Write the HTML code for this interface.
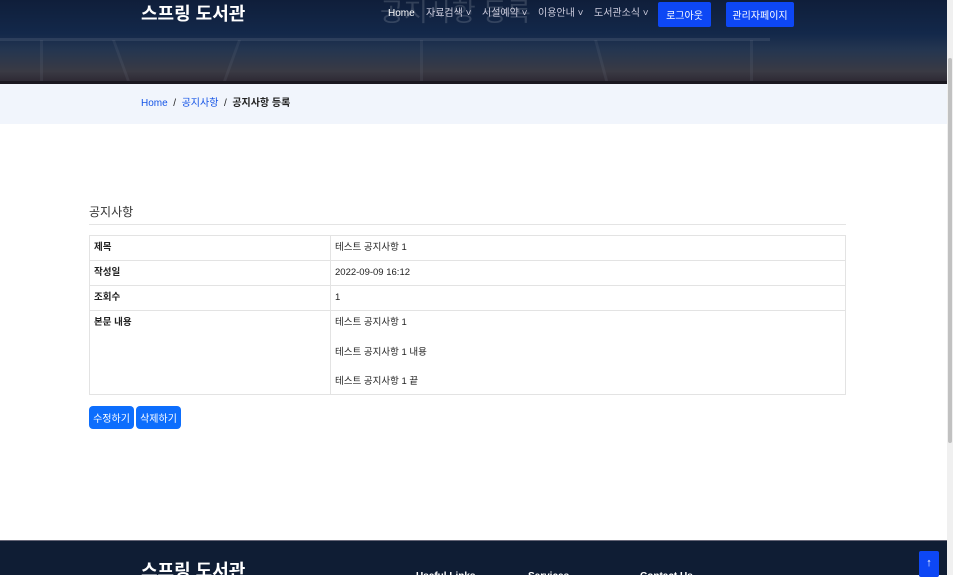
<!DOCTYPE html>
<html><head><meta charset="utf-8"><style>
*{margin:0;padding:0;box-sizing:border-box}
body{width:953px;height:575px;overflow:hidden;background:#fff;font-family:"Liberation Sans","Noto Sans CJK KR",sans-serif;position:relative}
.hdr{position:absolute;left:0;top:0;width:947px;height:84px;background:linear-gradient(180deg,#0f1e3a 0%,#13284a 40%,#253650 60%,#3a3a44 85%,#2a2530 100%);overflow:hidden}
.hdr .leg{position:absolute;top:40px;height:44px;width:3px;background:rgba(130,140,160,.12)}
.logo{position:absolute;left:141px;top:2px;color:#fff;font-size:18px;font-weight:bold;line-height:24px}
.nav{position:absolute;top:7px;font-size:10px;color:#ccd;line-height:14px}
.btn{position:absolute;top:2px;height:25px;background:#0d47f5;color:#fff;font-size:10px;display:flex;align-items:center;justify-content:center;border-radius:2px}
.bc{position:absolute;left:0;top:84px;width:947px;height:40px;background:#f1f5fc;font-size:10px;line-height:40px;padding-left:141px;color:#222}
.bc a{color:#1454e6;text-decoration:none}
h2{position:absolute;left:89px;top:203px;font-size:12px;font-weight:normal;color:#333}
.hr{position:absolute;left:89px;top:224px;width:757px;height:1px;background:#e4e4e4}
table{position:absolute;left:89px;top:235px;width:757px;border-collapse:collapse;font-size:9.5px;color:#222}
td{border:1px solid #e3e3e3;padding:0 4px;vertical-align:top;height:25px;line-height:23px}
td.k{width:241px;font-weight:bold}
.b2{position:absolute;top:406px;height:23px;background:#0d6efd;color:#fff;font-size:10px;display:flex;align-items:center;justify-content:center;border-radius:4px}
.ft{position:absolute;left:0;top:540px;width:947px;height:35px;background:#0f1d34;border-top:1px solid #667}
.scroll{position:absolute;left:947px;top:0;width:6px;height:575px;background:#f0f0f0}
.scroll div{position:absolute;left:1px;top:58px;width:4px;height:385px;background:#c1c1c1;border-radius:2px}
</style></head><body>
<div class="hdr">
<div class="leg" style="left:40px"></div><div class="leg" style="left:120px;transform:skewX(20deg)"></div>
<div class="leg" style="left:230px;transform:skewX(-20deg)"></div><div class="leg" style="left:420px"></div>
<div class="leg" style="left:600px;transform:skewX(15deg)"></div><div class="leg" style="left:750px"></div>
<div style="position:absolute;left:0;top:38px;width:770px;height:3px;background:rgba(160,170,190,.15)"></div>
<div style="position:absolute;left:0;top:81px;width:947px;height:3px;background:#1a1820"></div>
<div style="position:absolute;left:380px;top:-8px;font-size:26px;color:rgba(255,255,255,.15)">공지사항 등록</div>
<div class="logo">스프링 도서관</div>
<div class="nav" style="left:388px;color:#fff">Home</div>
<div class="nav" style="left:426px">자료검색 ˅</div>
<div class="nav" style="left:482px">시설예약 ˅</div>
<div class="nav" style="left:538px">이용안내 ˅</div>
<div class="nav" style="left:594px">도서관소식 ˅</div>
<div class="btn" style="left:658px;width:53px">로그아웃</div>
<div class="btn" style="left:726px;width:68px">관리자페이지</div>
</div>
<div class="bc"><a>Home</a> &nbsp;/&nbsp; <a>공지사항</a> &nbsp;/&nbsp; <b>공지사항 등록</b></div>
<h2>공지사항</h2><div class="hr"></div>
<table>
<tr><td class="k">제목</td><td>테스트 공지사항 1</td></tr>
<tr><td class="k">작성일</td><td>2022-09-09 16:12</td></tr>
<tr><td class="k">조회수</td><td>1</td></tr>
<tr><td class="k" style="height:84px">본문 내용</td><td style="line-height:29.5px;padding-top:0;height:84px"><div style="margin-top:-3px;height:80px;overflow:visible">테스트 공지사항 1<br>테스트 공지사항 1 내용<br>테스트 공지사항 1 끝</div></td></tr>
</table>
<div class="b2" style="left:89px;width:45px">수정하기</div>
<div class="b2" style="left:136px;width:45px">삭제하기</div>
<div class="ft">
<div style="position:absolute;left:141px;top:16px;color:#fff;font-size:18px;font-weight:bold">스프링 도서관</div>
<div style="position:absolute;left:416px;top:30px;color:#fff;font-size:10px;font-weight:bold">Useful Links</div>
<div style="position:absolute;left:528px;top:30px;color:#fff;font-size:10px;font-weight:bold">Services</div>
<div style="position:absolute;left:640px;top:30px;color:#fff;font-size:10px;font-weight:bold">Contact Us</div>
<div style="position:absolute;left:919px;top:10px;width:20px;height:26px;background:#0d47f5;border-radius:2px;color:#fff;font-size:11px;text-align:center;line-height:24px">↑</div>
</div>
<div class="scroll"><div></div></div>
</body></html>
